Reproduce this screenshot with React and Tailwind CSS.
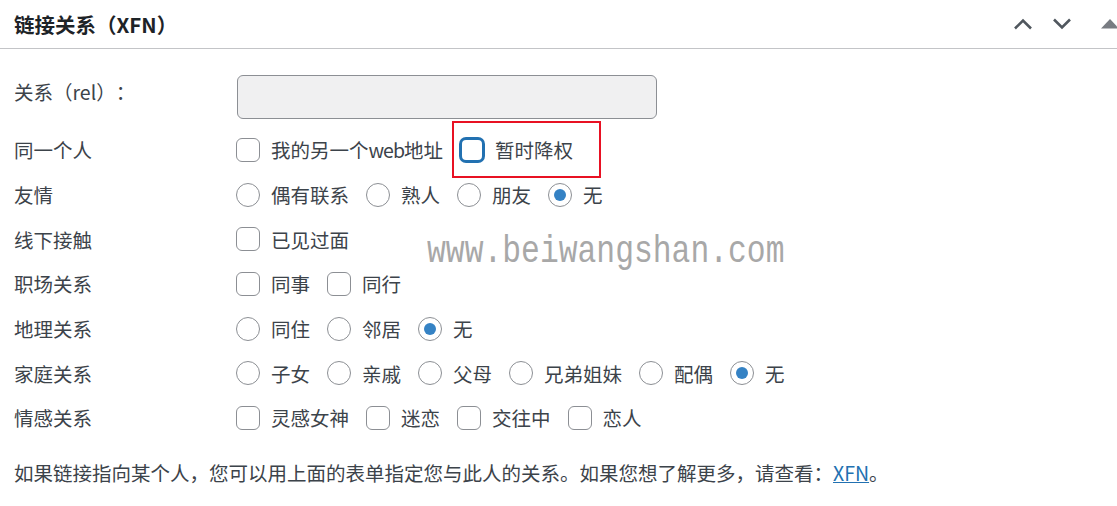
import React from "react";

const FONT = { fontFamily: '"Noto Sans CJK SC", "Noto Sans", sans-serif' };

function Checkbox({ focused }) {
  return focused ? (
    <span className="block w-[24px] h-[24px] rounded-[6px] border-2 border-[#2271b1] shadow-[0_0_0_1px_#2271b1] bg-white shrink-0" />
  ) : (
    <span className="block w-[24px] h-[24px] rounded-[6px] border-[1.5px] border-[#8c8f94] bg-white shrink-0" />
  );
}

function Radio({ checked }) {
  return (
    <span className="flex items-center justify-center w-[24px] h-[24px] rounded-full border-[1.5px] border-[#8c8f94] bg-white shrink-0">
      {checked && <span className="block w-[12px] h-[12px] rounded-full bg-[#3582c4]" />}
    </span>
  );
}

function Item({ type, text, checked, focused, highlight }) {
  return (
    <span className="relative flex items-center gap-[11px]">
      {type === "c" ? <Checkbox focused={focused} /> : <Radio checked={checked} />}
      <span>{text}</span>
      {highlight && (
        <span className="absolute left-[-8px] right-[-28px] top-[-14px] bottom-[-14px] border-2 border-[#e81123] pointer-events-none" />
      )}
    </span>
  );
}

function Row({ label, children }) {
  return (
    <div className="flex items-center h-[44.7px]">
      <div className="w-[236px] pl-[14px] shrink-0">{label}</div>
      <div className="flex items-center gap-[17px]">{children}</div>
    </div>
  );
}

function Chevron({ up }) {
  return (
    <svg width="20" height="12" viewBox="0 0 20 12" className="shrink-0">
      <polyline
        points={up ? "2,10.5 10,2.5 18,10.5" : "2,1.5 10,9.5 18,1.5"}
        fill="none"
        stroke="#50575e"
        strokeWidth="2.6"
      />
    </svg>
  );
}

export default function App() {
  return (
    <div className="relative w-[1117px] h-[506px] overflow-hidden bg-white text-[#3c434a] text-[19.5px] leading-[1.5] [text-spacing-trim:space-all]" style={FONT}>
      <div className="flex items-center h-[49px] border-b border-[#c3c4c7] pl-[14px]">
        <h2 className="text-[20.5px] font-bold text-[#1d2327] leading-none">链接关系（XFN）</h2>
        <div className="ml-auto mr-[-2px] flex items-center shrink-0">
          <Chevron up />
          <span className="w-[19px] shrink-0" />
          <Chevron />
          <span className="w-[29px] shrink-0" />
          <svg width="18" height="10" viewBox="0 0 18 10" className="shrink-0">
            <polygon points="9,0 18,9.5 0,9.5" fill="#787c82" />
          </svg>
        </div>
      </div>

      <div className="flex items-start mt-[26px] h-[44px]">
        <div className="w-[236px] pl-[14px] pt-[2px] shrink-0">关系（rel）：</div>
        <div className="ml-[1px] w-[420px] h-[44px] rounded-[6px] border-[1.5px] border-[#8c8f94] bg-[#f0f0f1]" />
      </div>

      <div className="mt-[8.5px]">
        <Row label="同一个人">
          <Item type="c" text={<>我的另一个<span className="tracking-[-1px]">web</span>地址</>} />
          <Item type="c" text="暂时降权" focused highlight />
        </Row>
        <Row label="友情">
          <Item type="r" text="偶有联系" />
          <Item type="r" text="熟人" />
          <Item type="r" text="朋友" />
          <Item type="r" text="无" checked />
        </Row>
        <Row label="线下接触">
          <Item type="c" text="已见过面" />
        </Row>
        <Row label="职场关系">
          <Item type="c" text="同事" />
          <Item type="c" text="同行" />
        </Row>
        <Row label="地理关系">
          <Item type="r" text="同住" />
          <Item type="r" text="邻居" />
          <Item type="r" text="无" checked />
        </Row>
        <Row label="家庭关系">
          <Item type="r" text="子女" />
          <Item type="r" text="亲戚" />
          <Item type="r" text="父母" />
          <Item type="r" text="兄弟姐妹" />
          <Item type="r" text="配偶" />
          <Item type="r" text="无" checked />
        </Row>
        <Row label="情感关系">
          <Item type="c" text="灵感女神" />
          <Item type="c" text="迷恋" />
          <Item type="c" text="交往中" />
          <Item type="c" text="恋人" />
        </Row>
      </div>

      <p className="mt-[18px] pl-[14px]">
        如果链接指向某个人，您可以用上面的表单指定您与此人的关系。如果您想了解更多，请查看：
        <a className="text-[#2271b1] underline">XFN</a>。
      </p>

      <div
        className="absolute left-[427px] top-[233px] text-[38px] leading-none text-[#a8a8a8] origin-left scale-x-[0.825] whitespace-nowrap pointer-events-none"
        style={{ fontFamily: '"Liberation Mono", monospace' }}
      >
        www.beiwangshan.com
      </div>
    </div>
  );
}
